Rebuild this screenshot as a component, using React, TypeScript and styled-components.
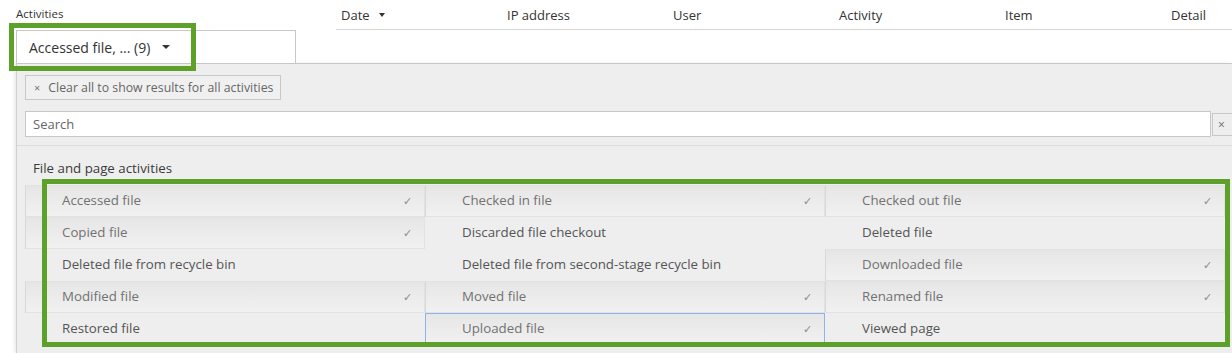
import styled, { createGlobalStyle } from 'styled-components'

type Activity = { label: string; selected?: boolean; focused?: boolean }

const activities: Activity[] = [
  { label: 'Accessed file', selected: true },
  { label: 'Checked in file', selected: true },
  { label: 'Checked out file', selected: true },
  { label: 'Copied file', selected: true },
  { label: 'Discarded file checkout' },
  { label: 'Deleted file' },
  { label: 'Deleted file from recycle bin' },
  { label: 'Deleted file from second-stage recycle bin' },
  { label: 'Downloaded file', selected: true },
  { label: 'Modified file', selected: true },
  { label: 'Moved file', selected: true },
  { label: 'Renamed file', selected: true },
  { label: 'Restored file' },
  { label: 'Uploaded file', selected: true, focused: true },
  { label: 'Viewed page' },
]

const columns = ['Date', 'IP address', 'User', 'Activity', 'Item', 'Detail']

const GlobalStyle = createGlobalStyle`
  html, body {
    margin: 0;
    padding: 0;
    background: #ffffff;
    font-family: 'Open Sans', 'Noto Sans', sans-serif;
    overflow: hidden;
  }
`

const Page = styled.div`
  position: relative;
  width: 1232px;
  height: 353px;
  overflow: hidden;
`

const Top = styled.div`
  display: flex;
  height: 63px;
`

const FilterColumn = styled.div`
  width: 336px;
  flex-shrink: 0;
  padding-left: 16px;
  box-sizing: border-box;
  display: flex;
  flex-direction: column;
`

const FilterLabel = styled.div`
  font-size: 11.5px;
  color: #333;
  height: 30px;
  line-height: 28px;
`

const DropdownButton = styled.div`
  width: 280px;
  height: 33px;
  box-sizing: border-box;
  border: 1px solid #c8c8c8;
  border-bottom: none;
  background: #fff;
  display: flex;
  align-items: center;
  padding-left: 12px;
  font-size: 14px;
  color: #333;
  position: relative;
  z-index: 2;
`

const Caret = styled.span`
  margin-left: 12px;
  width: 0;
  height: 0;
  border-left: 4px solid transparent;
  border-right: 4px solid transparent;
  border-top: 4px solid #333;
`

const HeaderRow = styled.div`
  display: grid;
  grid-template-columns: repeat(6, 166px);
  height: 29px;
  border-bottom: 1px solid #d4d4d4;
  align-items: center;
  flex: 1;
  min-width: 0;
  overflow: hidden;
`

const HeaderCell = styled.div`
  font-size: 13px;
  color: #333;
  padding-left: 5px;
  display: flex;
  align-items: center;
  white-space: nowrap;
`

const HeaderCaret = styled(Caret)`
  margin-left: 9px;
  border-left-width: 3.5px;
  border-right-width: 3.5px;
`

const Panel = styled.div`
  margin-left: 16px;
  height: 290px;
  background: #eeeeee;
  border-top: 1px solid #c8c8c8;
  border-left: 1px solid #d0d0d0;
  box-shadow: -2px 0 3px rgba(0, 0, 0, 0.08);
  box-sizing: border-box;
  display: flex;
  flex-direction: column;
`

const Toolbar = styled.div`
  padding: 11px 0 8px 8px;
  display: flex;
  flex-direction: column;
  gap: 11px;
  border-bottom: 1px solid #dcdcdc;
`

const ClearButton = styled.div`
  align-self: flex-start;
  height: 25px;
  box-sizing: border-box;
  border: 1px solid #c8c8c8;
  background: #f0f0f0;
  display: flex;
  align-items: center;
  padding: 0 7px 0 8px;
  font-size: 12.3px;
  color: #666;
  gap: 8px;
`

const ClearX = styled.span`
  font-size: 11px;
  color: #777;
`

const SearchRow = styled.div`
  display: flex;
  align-items: center;
`

const SearchInput = styled.div`
  width: 1193px;
  height: 26px;
  box-sizing: border-box;
  border: 1px solid #c8c8c8;
  background: #fff;
  display: flex;
  align-items: center;
  padding-left: 7px;
  font-size: 13px;
  color: #666;
`

const SearchClear = styled.div`
  margin-left: 1px;
  height: 23px;
  width: 20px;
  box-sizing: border-box;
  border: 1px solid #c8c8c8;
  border-right: none;
  background: #eee;
  font-size: 12px;
  color: #666;
  display: flex;
  align-items: center;
  padding-left: 5px;
`

const GroupTitle = styled.div`
  font-size: 13.3px;
  color: #3a3a3a;
  padding: 13px 0 0 16px;
  height: 26px;
`

const Grid = styled.div`
  margin-left: 8px;
  display: grid;
  grid-template-columns: repeat(3, 400px);
  grid-auto-rows: 32px;
`

const Cell = styled.div<{ $selected?: boolean; $focused?: boolean }>`
  box-sizing: border-box;
  display: flex;
  align-items: center;
  justify-content: space-between;
  padding: 0 12px 2px 36px;
  font-size: 13.3px;
  color: ${(p) => (p.$selected ? '#727272' : '#555')};
  background: ${(p) =>
    p.$selected ? 'linear-gradient(#e6e6e6, #f1f1f1)' : 'transparent'};
  border: 1px solid
    ${(p) => (p.$focused ? '#8fb3ea' : p.$selected ? '#e2e2e2' : 'transparent')};
  border-left-color: ${(p) =>
    p.$focused ? '#8fb3ea' : p.$selected ? '#d8d8d8' : 'transparent'};
`

const Check = styled.span`
  font-size: 11px;
  color: #8a8a8a;
`

const Highlight = styled.div`
  position: absolute;
  box-sizing: border-box;
  border: 5px solid #5ea12a;
  pointer-events: none;
  z-index: 5;
`

export default function App() {
  return (
    <Page>
      <GlobalStyle />
      <Top>
        <FilterColumn>
          <FilterLabel>Activities</FilterLabel>
          <DropdownButton>
            Accessed file, ... (9)
            <Caret />
          </DropdownButton>
        </FilterColumn>
        <HeaderRow>
          {columns.map((c, i) => (
            <HeaderCell key={c}>
              {c}
              {i === 0 && <HeaderCaret />}
            </HeaderCell>
          ))}
        </HeaderRow>
      </Top>
      <Panel>
        <Toolbar>
          <ClearButton>
            <ClearX>×</ClearX>
            Clear all to show results for all activities
          </ClearButton>
          <SearchRow>
            <SearchInput>Search</SearchInput>
            <SearchClear>×</SearchClear>
          </SearchRow>
        </Toolbar>
        <GroupTitle>File and page activities</GroupTitle>
        <Grid>
          {activities.map((a) => (
            <Cell key={a.label} $selected={a.selected} $focused={a.focused}>
              {a.label}
              {a.selected && <Check>✓</Check>}
            </Cell>
          ))}
        </Grid>
      </Panel>
      <Highlight style={{ left: 9, top: 23, width: 187, height: 48 }} />
      <Highlight style={{ left: 42, top: 179, width: 1188, height: 168 }} />
    </Page>
  )
}
